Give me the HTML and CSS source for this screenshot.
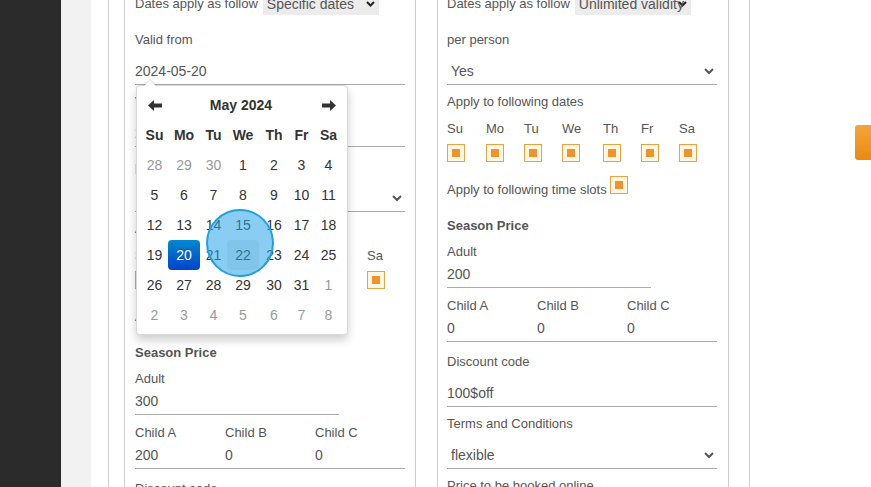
FILE: index.html
```html
<!DOCTYPE html>
<html lang="en">
<head>
  <meta charset="UTF-8">
  <title>Offer settings</title>
  <link rel="stylesheet" href="styles.css">
</head>
<body>

<div class="sidebar"></div>
<div class="strip"></div>

<div class="main">
  <div class="panel">

    <!-- left offer -->
    <div class="card">
      <div class="inline-row">
        <label>Dates apply as follow</label>
        <select class="mode"><option>Specific dates</option><option>Unlimited validity</option></select>
      </div>

      <div class="field">
        <label>Valid from</label>
        <input type="text" value="2024-05-20">

        <div class="datepicker">
          <table>
            <thead>
              <tr>
                <th class="nav"><svg width="14" height="11" viewBox="0 0 14 11"><path d="M0 5.5 L6 0 L6 3.5 L14 3.5 L14 7.5 L6 7.5 L6 11 Z" fill="#333"/></svg></th>
                <th colspan="5" class="title">May 2024</th>
                <th class="nav"><svg width="14" height="11" viewBox="0 0 14 11"><path d="M14 5.5 L8 0 L8 3.5 L0 3.5 L0 7.5 L8 7.5 L8 11 Z" fill="#333"/></svg></th>
              </tr>
              <tr class="dow">
                <th>Su</th><th>Mo</th><th>Tu</th><th>We</th><th>Th</th><th>Fr</th><th>Sa</th>
              </tr>
            </thead>
            <tbody>
              <tr><td class="old">28</td><td class="old">29</td><td class="old">30</td><td>1</td><td>2</td><td>3</td><td>4</td></tr>
              <tr><td>5</td><td>6</td><td>7</td><td>8</td><td>9</td><td>10</td><td>11</td></tr>
              <tr><td>12</td><td>13</td><td>14</td><td>15</td><td>16</td><td>17</td><td>18</td></tr>
              <tr><td>19</td><td class="active">20</td><td>21</td><td class="hover">22</td><td>23</td><td>24</td><td>25</td></tr>
              <tr><td>26</td><td>27</td><td>28</td><td>29</td><td>30</td><td>31</td><td class="old">1</td></tr>
              <tr><td class="old">2</td><td class="old">3</td><td class="old">4</td><td class="old">5</td><td class="old">6</td><td class="old">7</td><td class="old">8</td></tr>
            </tbody>
          </table>
          <div class="touch"></div>
        </div>
      </div>

      <div class="field until">
        <label>Valid until</label>
        <input type="text" value="2024-12-31">
      </div>

      <div class="field">
        <label>per person</label>
        <select class="line"><option>Yes</option><option>No</option></select>
      </div>

      <label>Apply to following dates</label>
      <div class="days">
        <div class="day"><span>Su</span><i class="check"></i></div>
        <div class="day"><span>Mo</span><i class="check"></i></div>
        <div class="day"><span>Tu</span><i class="check"></i></div>
        <div class="day"><span>We</span><i class="check"></i></div>
        <div class="day"><span>Th</span><i class="check"></i></div>
        <div class="day"><span>Fr</span><i class="check"></i></div>
        <div class="day"><span>Sa</span><i class="check"></i></div>
      </div>

      <div class="slots">Apply to following time slots <i class="check"></i></div>

      <div class="section">Season Price</div>
      <label>Adult</label>
      <input type="text" class="adult" value="300">
      <div class="children">
        <div><label>Child A</label><input type="text" value="200"></div>
        <div><label>Child B</label><input type="text" value="0"></div>
        <div><label>Child C</label><input type="text" value="0"></div>
      </div>

      <div class="field">
        <label>Discount code</label>
        <input type="text" value="">
      </div>
    </div>

    <!-- right offer -->
    <div class="card right">
      <div class="inline-row">
        <label>Dates apply as follow</label>
        <select class="mode"><option>Unlimited validity</option><option>Specific dates</option></select>
      </div>

      <div class="field">
        <label>per person</label>
        <select class="line"><option>Yes</option><option>No</option></select>
      </div>

      <label>Apply to following dates</label>
      <div class="days">
        <div class="day"><span>Su</span><i class="check"></i></div>
        <div class="day"><span>Mo</span><i class="check"></i></div>
        <div class="day"><span>Tu</span><i class="check"></i></div>
        <div class="day"><span>We</span><i class="check"></i></div>
        <div class="day"><span>Th</span><i class="check"></i></div>
        <div class="day"><span>Fr</span><i class="check"></i></div>
        <div class="day"><span>Sa</span><i class="check"></i></div>
      </div>

      <div class="slots">Apply to following time slots <i class="check"></i></div>

      <div class="section">Season Price</div>
      <label>Adult</label>
      <input type="text" class="adult" value="200">
      <div class="children">
        <div><label>Child A</label><input type="text" value="0"></div>
        <div><label>Child B</label><input type="text" value="0"></div>
        <div><label>Child C</label><input type="text" value="0"></div>
      </div>

      <div class="field">
        <label>Discount code</label>
        <input type="text" value="100$off">
      </div>

      <div class="field">
        <label>Terms and Conditions</label>
        <select class="line"><option>flexible</option><option>strict</option></select>
      </div>

      <div class="field">
        <label>Price to be booked online</label>
        <input type="text" value="">
      </div>
    </div>

  </div>

  <button class="save"></button>
</div>

</body>
</html>
```

FILE: styles.css
```css
html, body { height: 100%; }
body {
  margin: 0;
  display: flex;
  font-family: "Liberation Sans", Arial, sans-serif;
  color: #555;
  overflow: hidden;
  background: #fff;
}
.sidebar { width: 61px; background: #2b2b2b; flex-shrink: 0; }
.strip { width: 30px; background: #f2f2f2; flex-shrink: 0; }
.main {
  flex: 1;
  display: flex;
  align-items: flex-start;
  padding-left: 17px;
}
.panel {
  display: grid;
  grid-template-columns: 292px 292px;
  column-gap: 21px;
  padding: 0 20px 0 15px;
  border-left: 1px solid #ccc;
  border-right: 1px solid #ccc;
  margin-top: -20px;
  height: 560px;
}
.card {
  border: 1px solid #ccc;
  padding: 12px 10px 0 10px;
}
.card.right { padding-left: 9px; padding-right: 11px; }
label {
  display: block;
  font-size: 13px;
  line-height: 18px;
}
input, select {
  font-family: "Liberation Sans", Arial, sans-serif;
  font-size: 14px;
  color: #555;
}
input {
  display: block;
  box-sizing: border-box;
  width: 100%;
  height: 28px;
  padding: 0;
  border: none;
  border-bottom: 1px solid #aaa;
  background: transparent;
  outline: none;
}
.inline-row {
  display: flex;
  align-items: center;
  margin-bottom: 16px;
}
.inline-row label { margin-right: 5px; }
select.mode {
  -webkit-appearance: none;
  appearance: none;
  box-sizing: border-box;
  width: 116px;
  height: 22px;
  padding: 0 0 0 4px;
  border: none;
  border-radius: 0;
  background: #ececec url("data:image/svg+xml;utf8,<svg xmlns='http://www.w3.org/2000/svg' width='9' height='6'><polyline points='1,1 4.5,4.5 8,1' fill='none' stroke='%23222' stroke-width='2'/></svg>") no-repeat right 4px center;
}
select.line {
  display: block;
  width: 100%;
  height: 28px;
  border: none;
  border-bottom: 1px solid #aaa;
  border-radius: 0;
  background: transparent;
}
.field { position: relative; margin-bottom: 8px; }
.field label { margin-bottom: 8px; }
.field.until { margin-bottom: 11px; }

.days {
  display: flex;
  margin-top: 9px;
}
.day {
  display: flex;
  flex-direction: column;
  width: 38px;
  font-size: 13px;
  line-height: 18px;
}
.day:nth-child(1) { width: 39px; }
.day:nth-child(4) { width: 41px; }
.day span { margin-bottom: 6px; }
.check {
  display: inline-block;
  box-sizing: border-box;
  width: 18px;
  height: 18px;
  padding: 4px;
  border: 1px solid #e8a442;
  background: #fff7e4;
}
.check::before {
  content: "";
  display: block;
  width: 8px;
  height: 8px;
  background: #f0932b;
}
.slots {
  margin-top: 14px;
  font-size: 13px;
  line-height: 18px;
}
.section {
  margin-top: 18px;
  font-size: 13px;
  line-height: 18px;
  font-weight: bold;
}
.section + label { margin-top: 8px; }
input.adult { width: 204px; height: 27px; }
.children {
  display: grid;
  grid-template-columns: repeat(3, 1fr);
  margin-top: 9px;
  margin-bottom: 11px;
}
.children input { height: 27px; }

.save {
  margin-left: auto;
  margin-top: 125px;
  width: 16px;
  height: 35px;
  border: none;
  border-radius: 3px 0 0 3px;
  background: linear-gradient(#f5a43a, #e98a12);
}

/* date picker dropdown */
.datepicker {
  position: absolute;
  left: 1px;
  top: 54px;
  z-index: 5;
  padding: 4px;
  background: #fff;
  border: 1px solid rgba(0, 0, 0, 0.15);
  border-radius: 4px;
  box-shadow: 0 5px 10px rgba(0, 0, 0, 0.2);
  color: #333;
}
.datepicker::before {
  content: "";
  position: absolute;
  top: -7px;
  left: 6px;
  border-left: 7px solid transparent;
  border-right: 7px solid transparent;
  border-bottom: 7px solid rgba(0, 0, 0, 0.15);
}
.datepicker::after {
  content: "";
  position: absolute;
  top: -6px;
  left: 7px;
  border-left: 6px solid transparent;
  border-right: 6px solid transparent;
  border-bottom: 6px solid #fff;
}
.datepicker table {
  border-collapse: collapse;
  font-size: 14px;
}
.datepicker th, .datepicker td {
  height: 20px;
  padding: 5px 0;
  text-align: center;
  border-radius: 4px;
  line-height: 20px;
}
.datepicker th { font-weight: bold; }
.datepicker .dow th:nth-child(1) { width: 27px; }
.datepicker .dow th:nth-child(2) { width: 32px; }
.datepicker .dow th:nth-child(3) { width: 27px; }
.datepicker .dow th:nth-child(4) { width: 32px; }
.datepicker .dow th:nth-child(5) { width: 30px; }
.datepicker .dow th:nth-child(6) { width: 25px; }
.datepicker .dow th:nth-child(7) { width: 29px; }
.datepicker th.nav svg { display: block; margin: 0 auto; }
.datepicker td.old { color: #999; }
.datepicker td.hover { background: #eee; }
.datepicker td.active {
  color: #fff;
  background: linear-gradient(#0088cc, #0044cc);
  text-shadow: 0 -1px 0 rgba(0, 0, 0, 0.25);
}
.touch {
  position: absolute;
  left: 69px;
  top: 123px;
  width: 64px;
  height: 64px;
  border-radius: 50%;
  border: 2px solid #1ea1dd;
  background: rgba(40, 165, 232, 0.55);
}
```
